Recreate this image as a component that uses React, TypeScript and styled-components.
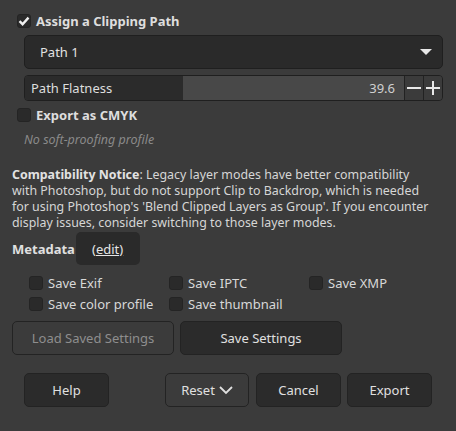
import React from "react";
import styled, { createGlobalStyle } from "styled-components";

const Global = createGlobalStyle`
  html, body { margin: 0; padding: 0; background: #3b3b3b; }
  body { font-family: "Noto Sans", "DejaVu Sans", sans-serif; color: #dcdcdc; }
  * { box-sizing: border-box; }
`;

const Dialog = styled.div`
  width: 456px;
  height: 431px;
  background: #3b3b3b;
  display: flex;
  flex-direction: column;
  font-size: 13px;
  overflow: hidden;
`;

const CheckRow = styled.label<{ $top: number }>`
  display: flex;
  align-items: center;
  gap: 5px;
  height: 16px;
  margin: ${(p) => p.$top}px 0 0 17px;
  font-weight: 700;
  color: #dedede;
  white-space: nowrap;
`;

const Box = styled.span`
  width: 14px;
  height: 14px;
  border-radius: 3px;
  background: #2a2a2a;
  border: 1px solid #242424;
  display: flex;
  align-items: center;
  justify-content: center;
  flex: none;
`;

const Combo = styled.div`
  margin: 6px 13px 0 24px;
  height: 34px;
  background: #2a2a2a;
  border: 1px solid #1f1f1f;
  border-radius: 5px;
  display: flex;
  align-items: center;
  justify-content: space-between;
  padding: 0 10px 0 15px;
  color: #e2e2e2;
`;

const Arrow = styled.span`
  width: 0;
  height: 0;
  border-left: 6px solid transparent;
  border-right: 6px solid transparent;
  border-top: 6px solid #e8e8e8;
`;

const Spin = styled.div`
  margin: 6px 13px 0 24px;
  height: 26px;
  border: 1px solid #1f1f1f;
  border-radius: 4px;
  display: flex;
  overflow: hidden;
`;

const SpinLabel = styled.div`
  width: 158px;
  background: #2b2b2b;
  display: flex;
  align-items: center;
  padding-left: 6px;
  color: #dedede;
`;

const SpinValue = styled.div`
  flex: 1;
  background: #484848;
  display: flex;
  align-items: center;
  justify-content: flex-end;
  padding-right: 9px;
  color: #d0d0d0;
`;

const SpinBtn = styled.div`
  width: 19px;
  flex: none;
  border-left: 1px solid #222;
  background: #3b3b3b;
  display: flex;
  align-items: center;
  justify-content: center;
`;

const Hint = styled.div`
  margin: 9px 0 0 24px;
  font-style: italic;
  color: #8a8a8a;
  font-size: 12.5px;
  line-height: 16px;
`;

const Notice = styled.p`
  margin: 19px 0 0 12px;
  line-height: 16px;
  color: #d6d6d6;
  font-size: 12.4px;
  white-space: nowrap;
  b { font-weight: 700; color: #e2e2e2; }
`;

const MetaRow = styled.div`
  display: flex;
  align-items: center;
  margin: 1px 0 0 12px;
  height: 33px;
`;

const MetaLabel = styled.span`
  font-weight: 700;
  width: 64px;
  color: #e0e0e0;
`;

const EditBtn = styled.span`
  width: 64px;
  height: 33px;
  border-radius: 5px;
  background: #2a2a2a;
  display: flex;
  align-items: center;
  padding-left: 16px;
  text-decoration: underline;
  color: #e6e6e6;
`;

const OptGrid = styled.div`
  display: grid;
  grid-template-columns: 140px 140px 140px;
  row-gap: 5px;
  margin: 10px 0 0 29px;
`;

const Opt = styled.label`
  display: flex;
  align-items: center;
  gap: 5px;
  height: 16px;
  color: #d8d8d8;
  white-space: nowrap;
`;

const BtnRow = styled.div<{ $top: number; $left: number }>`
  display: flex;
  margin: ${(p) => p.$top}px 0 0 ${(p) => p.$left}px;
`;

const Button = styled.div<{ $w: number; $gap?: number; $flat?: boolean; $disabled?: boolean }>`
  width: ${(p) => p.$w}px;
  height: 34px;
  margin-left: ${(p) => p.$gap ?? 0}px;
  border-radius: 5px;
  border: 1px solid #232323;
  background: ${(p) => (p.$flat ? "#3b3b3b" : "#2b2b2b")};
  color: ${(p) => (p.$disabled ? "#8e8e8e" : "#e0e0e0")};
  display: flex;
  align-items: center;
  justify-content: center;
  gap: 4px;
`;

const Check = () => (
  <svg width="12" height="12" viewBox="0 0 12 12">
    <path d="M1.5 6.2 L4.6 9.2 L10.5 2.6" fill="none" stroke="#f0f0f0" strokeWidth="2.4" />
  </svg>
);

const Minus = () => (
  <svg width="14" height="14" viewBox="0 0 14 14">
    <path d="M0 7 H14" stroke="#e8e8e8" strokeWidth="2" />
  </svg>
);

const Plus = () => (
  <svg width="14" height="14" viewBox="0 0 14 14">
    <path d="M0 7 H14 M7 0 V14" stroke="#e8e8e8" strokeWidth="2" />
  </svg>
);

const Chevron = () => (
  <svg width="14" height="10" viewBox="0 0 14 10">
    <path d="M1 2 L7 8 L13 2" fill="none" stroke="#e0e0e0" strokeWidth="1.8" />
  </svg>
);

export default function App() {
  return (
    <>
      <Global />
      <Dialog>
        <CheckRow $top={13}>
          <Box>
            <Check />
          </Box>
          Assign a Clipping Path
        </CheckRow>
        <Combo>
          <span>Path 1</span>
          <Arrow />
        </Combo>
        <Spin>
          <SpinLabel>Path Flatness</SpinLabel>
          <SpinValue>39.6</SpinValue>
          <SpinBtn>
            <Minus />
          </SpinBtn>
          <SpinBtn>
            <Plus />
          </SpinBtn>
        </Spin>
        <CheckRow $top={6}>
          <Box />
          Export as CMYK
        </CheckRow>
        <Hint>No soft-proofing profile</Hint>
        <Notice>
          <b>Compatibility Notice</b>: Legacy layer modes have better compatibility
          <br />
          with Photoshop, but do not support Clip to Backdrop, which is needed
          <br />
          for using Photoshop's 'Blend Clipped Layers as Group'. If you encounter
          <br />
          display issues, consider switching to those layer modes.
        </Notice>
        <MetaRow>
          <MetaLabel>Metadata</MetaLabel>
          <EditBtn>(edit)</EditBtn>
        </MetaRow>
        <OptGrid>
          <Opt>
            <Box />
            Save Exif
          </Opt>
          <Opt>
            <Box />
            Save IPTC
          </Opt>
          <Opt>
            <Box />
            Save XMP
          </Opt>
          <Opt>
            <Box />
            Save color profile
          </Opt>
          <Opt>
            <Box />
            Save thumbnail
          </Opt>
        </OptGrid>
        <BtnRow $top={9} $left={12}>
          <Button $w={162} $flat $disabled>
            Load Saved Settings
          </Button>
          <Button $w={162} $gap={6}>
            Save Settings
          </Button>
        </BtnRow>
        <BtnRow $top={18} $left={24}>
          <Button $w={85}>Help</Button>
          <Button $w={84} $gap={56} $flat>
            Reset <Chevron />
          </Button>
          <Button $w={85} $gap={7}>
            Cancel
          </Button>
          <Button $w={85} $gap={6}>
            Export
          </Button>
        </BtnRow>
      </Dialog>
    </>
  );
}
